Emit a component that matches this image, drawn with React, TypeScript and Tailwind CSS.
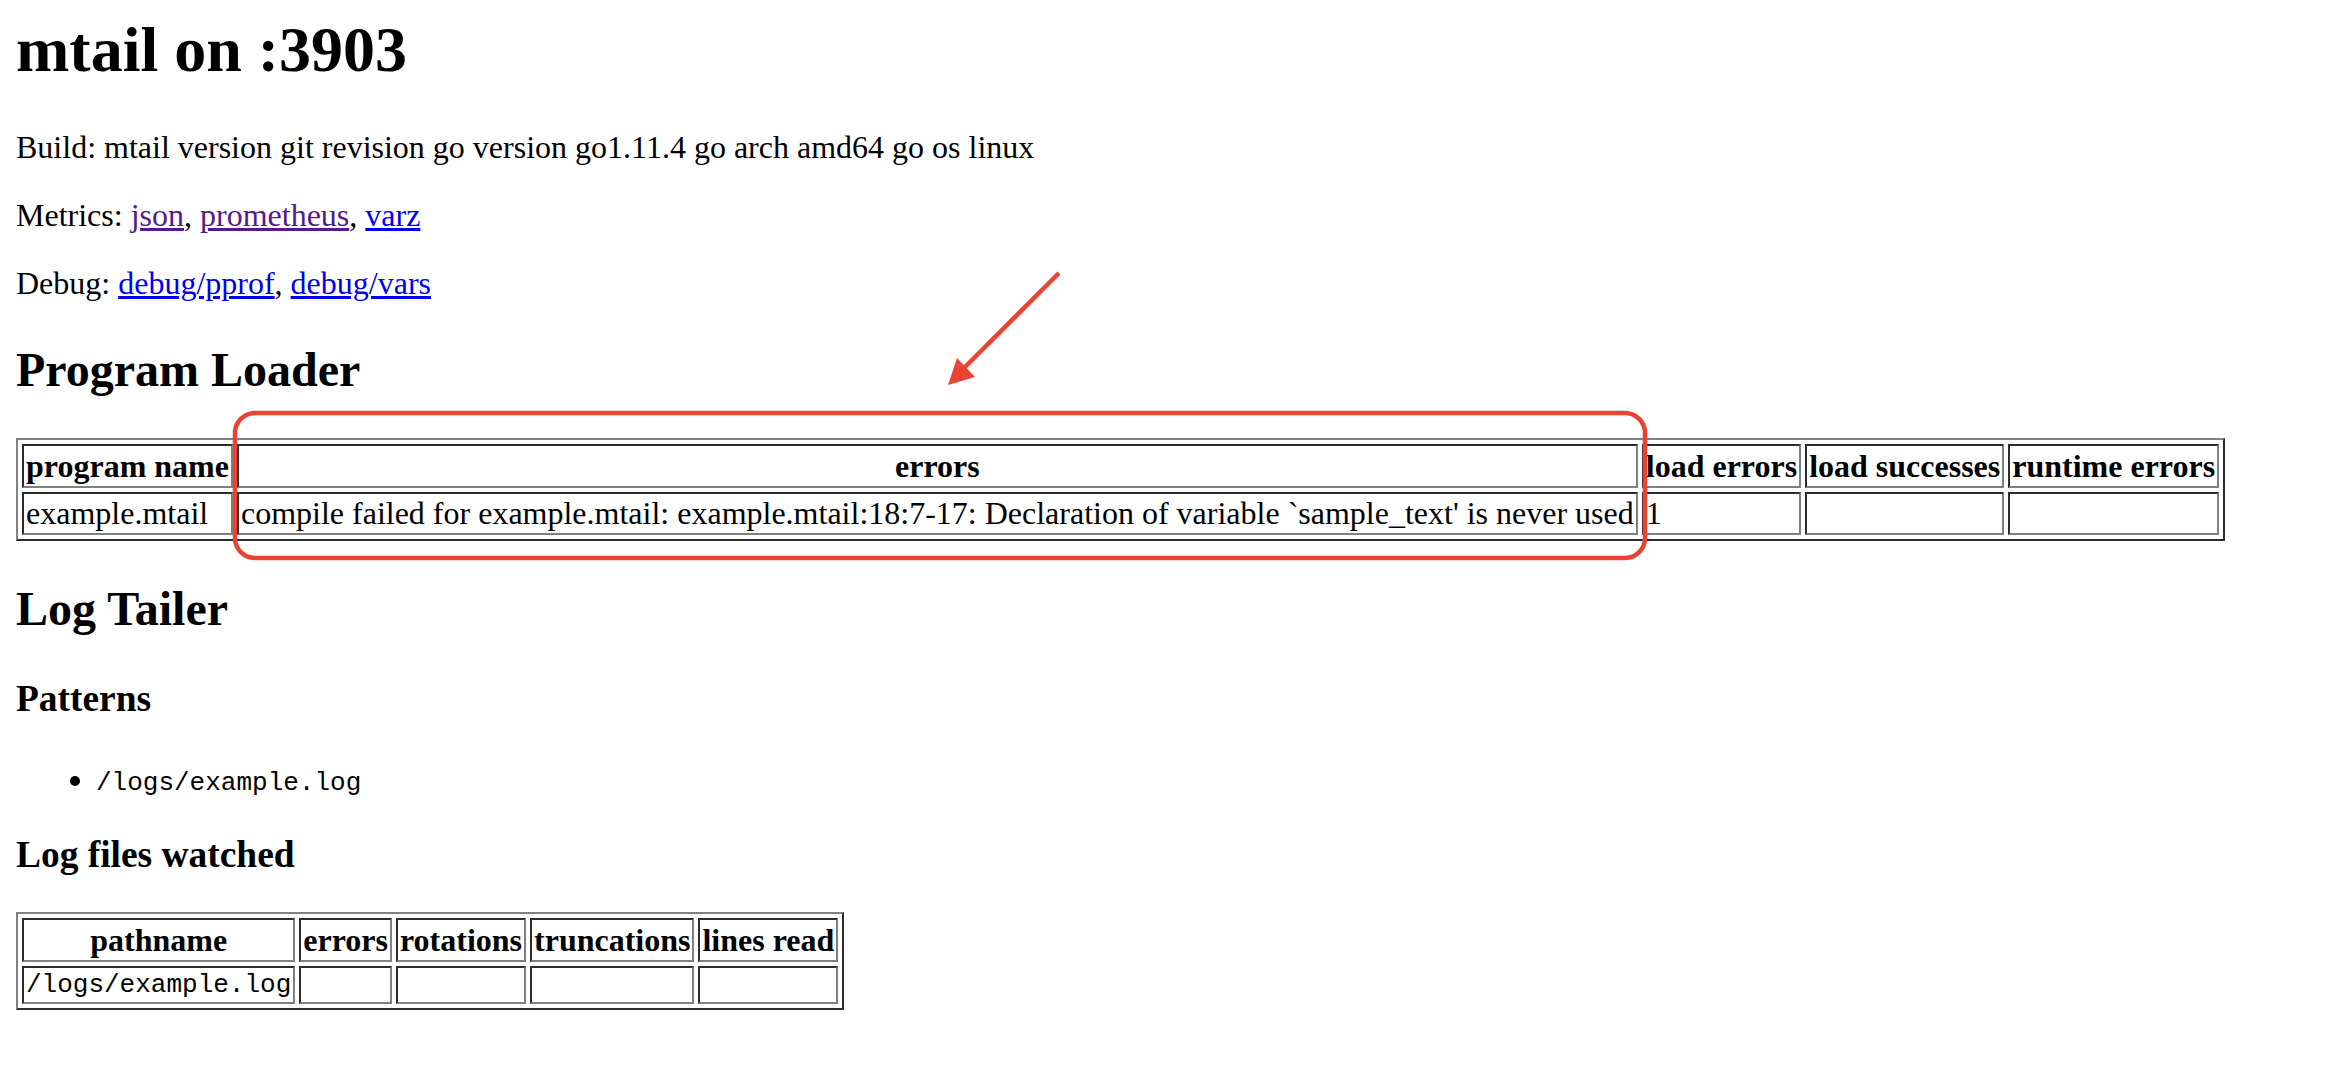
import React from "react";

const thCls =
  "border-2 border-solid border-t-[#2c2c2c] border-l-[#2c2c2c] border-r-[#808080] border-b-[#808080] p-[2px] font-bold text-center leading-[36px] whitespace-nowrap";
const tdCls =
  "border-2 border-solid border-t-[#2c2c2c] border-l-[#2c2c2c] border-r-[#808080] border-b-[#808080] p-[2px] text-left leading-[35px] whitespace-nowrap";
const tdMonoCls =
  "border-2 border-solid border-t-[#2c2c2c] border-l-[#2c2c2c] border-r-[#808080] border-b-[#808080] p-[2px] text-left leading-[30px] text-[26px] whitespace-nowrap";
const tableCls =
  "border-separate border-spacing-[4px] border-2 border-solid border-t-[#808080] border-l-[#808080] border-r-[#2c2c2c] border-b-[#2c2c2c]";

export default function App() {
  return (
    <div className="relative min-h-[1082px] w-full overflow-hidden bg-white text-black px-[16px] pt-[15px] text-[32px] leading-[36px] [font-family:'Liberation_Serif','Times_New_Roman',serif]">
      <h1 className="text-[64px] leading-[70px] font-bold">mtail on :3903</h1>

      <p className="mt-[44px]">
        Build: mtail version git revision go version go1.11.4 go arch amd64 go os linux
      </p>
      <p className="mt-[32px]">
        Metrics:{" "}
        <a href="#json" className="text-[#551a8b] underline">
          json
        </a>
        ,{" "}
        <a href="#prometheus" className="text-[#551a8b] underline">
          prometheus
        </a>
        ,{" "}
        <a href="#varz" className="text-[#0000ee] underline">
          varz
        </a>
      </p>
      <p className="mt-[32px]">
        Debug:{" "}
        <a href="#pprof" className="text-[#0000ee] underline">
          debug/pprof
        </a>
        ,{" "}
        <a href="#vars" className="text-[#0000ee] underline">
          debug/vars
        </a>
      </p>

      <h2 className="mt-[42px] text-[48px] leading-[54px] font-bold">Program Loader</h2>

      <table className={"mt-[41px] " + tableCls}>
        <tbody>
          <tr>
            <th className={thCls}>program name</th>
            <th className={thCls}>errors</th>
            <th className={thCls}>load errors</th>
            <th className={thCls}>load successes</th>
            <th className={thCls}>runtime errors</th>
          </tr>
          <tr>
            <td className={tdCls}>example.mtail</td>
            <td className={tdCls}>
              compile failed for example.mtail: example.mtail:18:7-17: Declaration of variable `sample_text' is never used
            </td>
            <td className={tdCls}>1</td>
            <td className={tdCls}></td>
            <td className={tdCls}></td>
          </tr>
        </tbody>
      </table>

      <h2 className="mt-[41px] text-[48px] leading-[54px] font-bold">Log Tailer</h2>

      <h3 className="mt-[42px] text-[37.44px] leading-[42px] font-bold">Patterns</h3>
      <ul className="mt-[41px] list-disc pl-[80px]">
        <li>
          <span className="text-[26px] [font-family:'Liberation_Mono','Courier_New',monospace]">
            /logs/example.log
          </span>
        </li>
      </ul>

      <h3 className="mt-[33px] text-[37.44px] leading-[42px] font-bold">Log files watched</h3>

      <table className={"mt-[36px] " + tableCls}>
        <tbody>
          <tr>
            <th className={thCls}>pathname</th>
            <th className={thCls}>errors</th>
            <th className={thCls}>rotations</th>
            <th className={thCls}>truncations</th>
            <th className={thCls}>lines read</th>
          </tr>
          <tr>
            <td className={tdMonoCls + " [font-family:'Liberation_Mono','Courier_New',monospace]"}>
              /logs/example.log
            </td>
            <td className={tdMonoCls}></td>
            <td className={tdMonoCls}></td>
            <td className={tdMonoCls}></td>
            <td className={tdMonoCls}></td>
          </tr>
        </tbody>
      </table>

      <svg
        className="pointer-events-none absolute left-0 top-0"
        width="2350"
        height="1082"
        viewBox="0 0 2350 1082"
      >
        <rect
          x="235"
          y="413"
          width="1410"
          height="145"
          rx="20"
          ry="20"
          fill="none"
          stroke="#ea4331"
          strokeWidth="4.5"
        />
        <line
          x1="1059"
          y1="273"
          x2="965"
          y2="367"
          stroke="#ea4331"
          strokeWidth="4.5"
          strokeLinecap="butt"
        />
        <polygon points="948,385 957,358 975,377" fill="#ea4331" />
      </svg>
    </div>
  );
}
